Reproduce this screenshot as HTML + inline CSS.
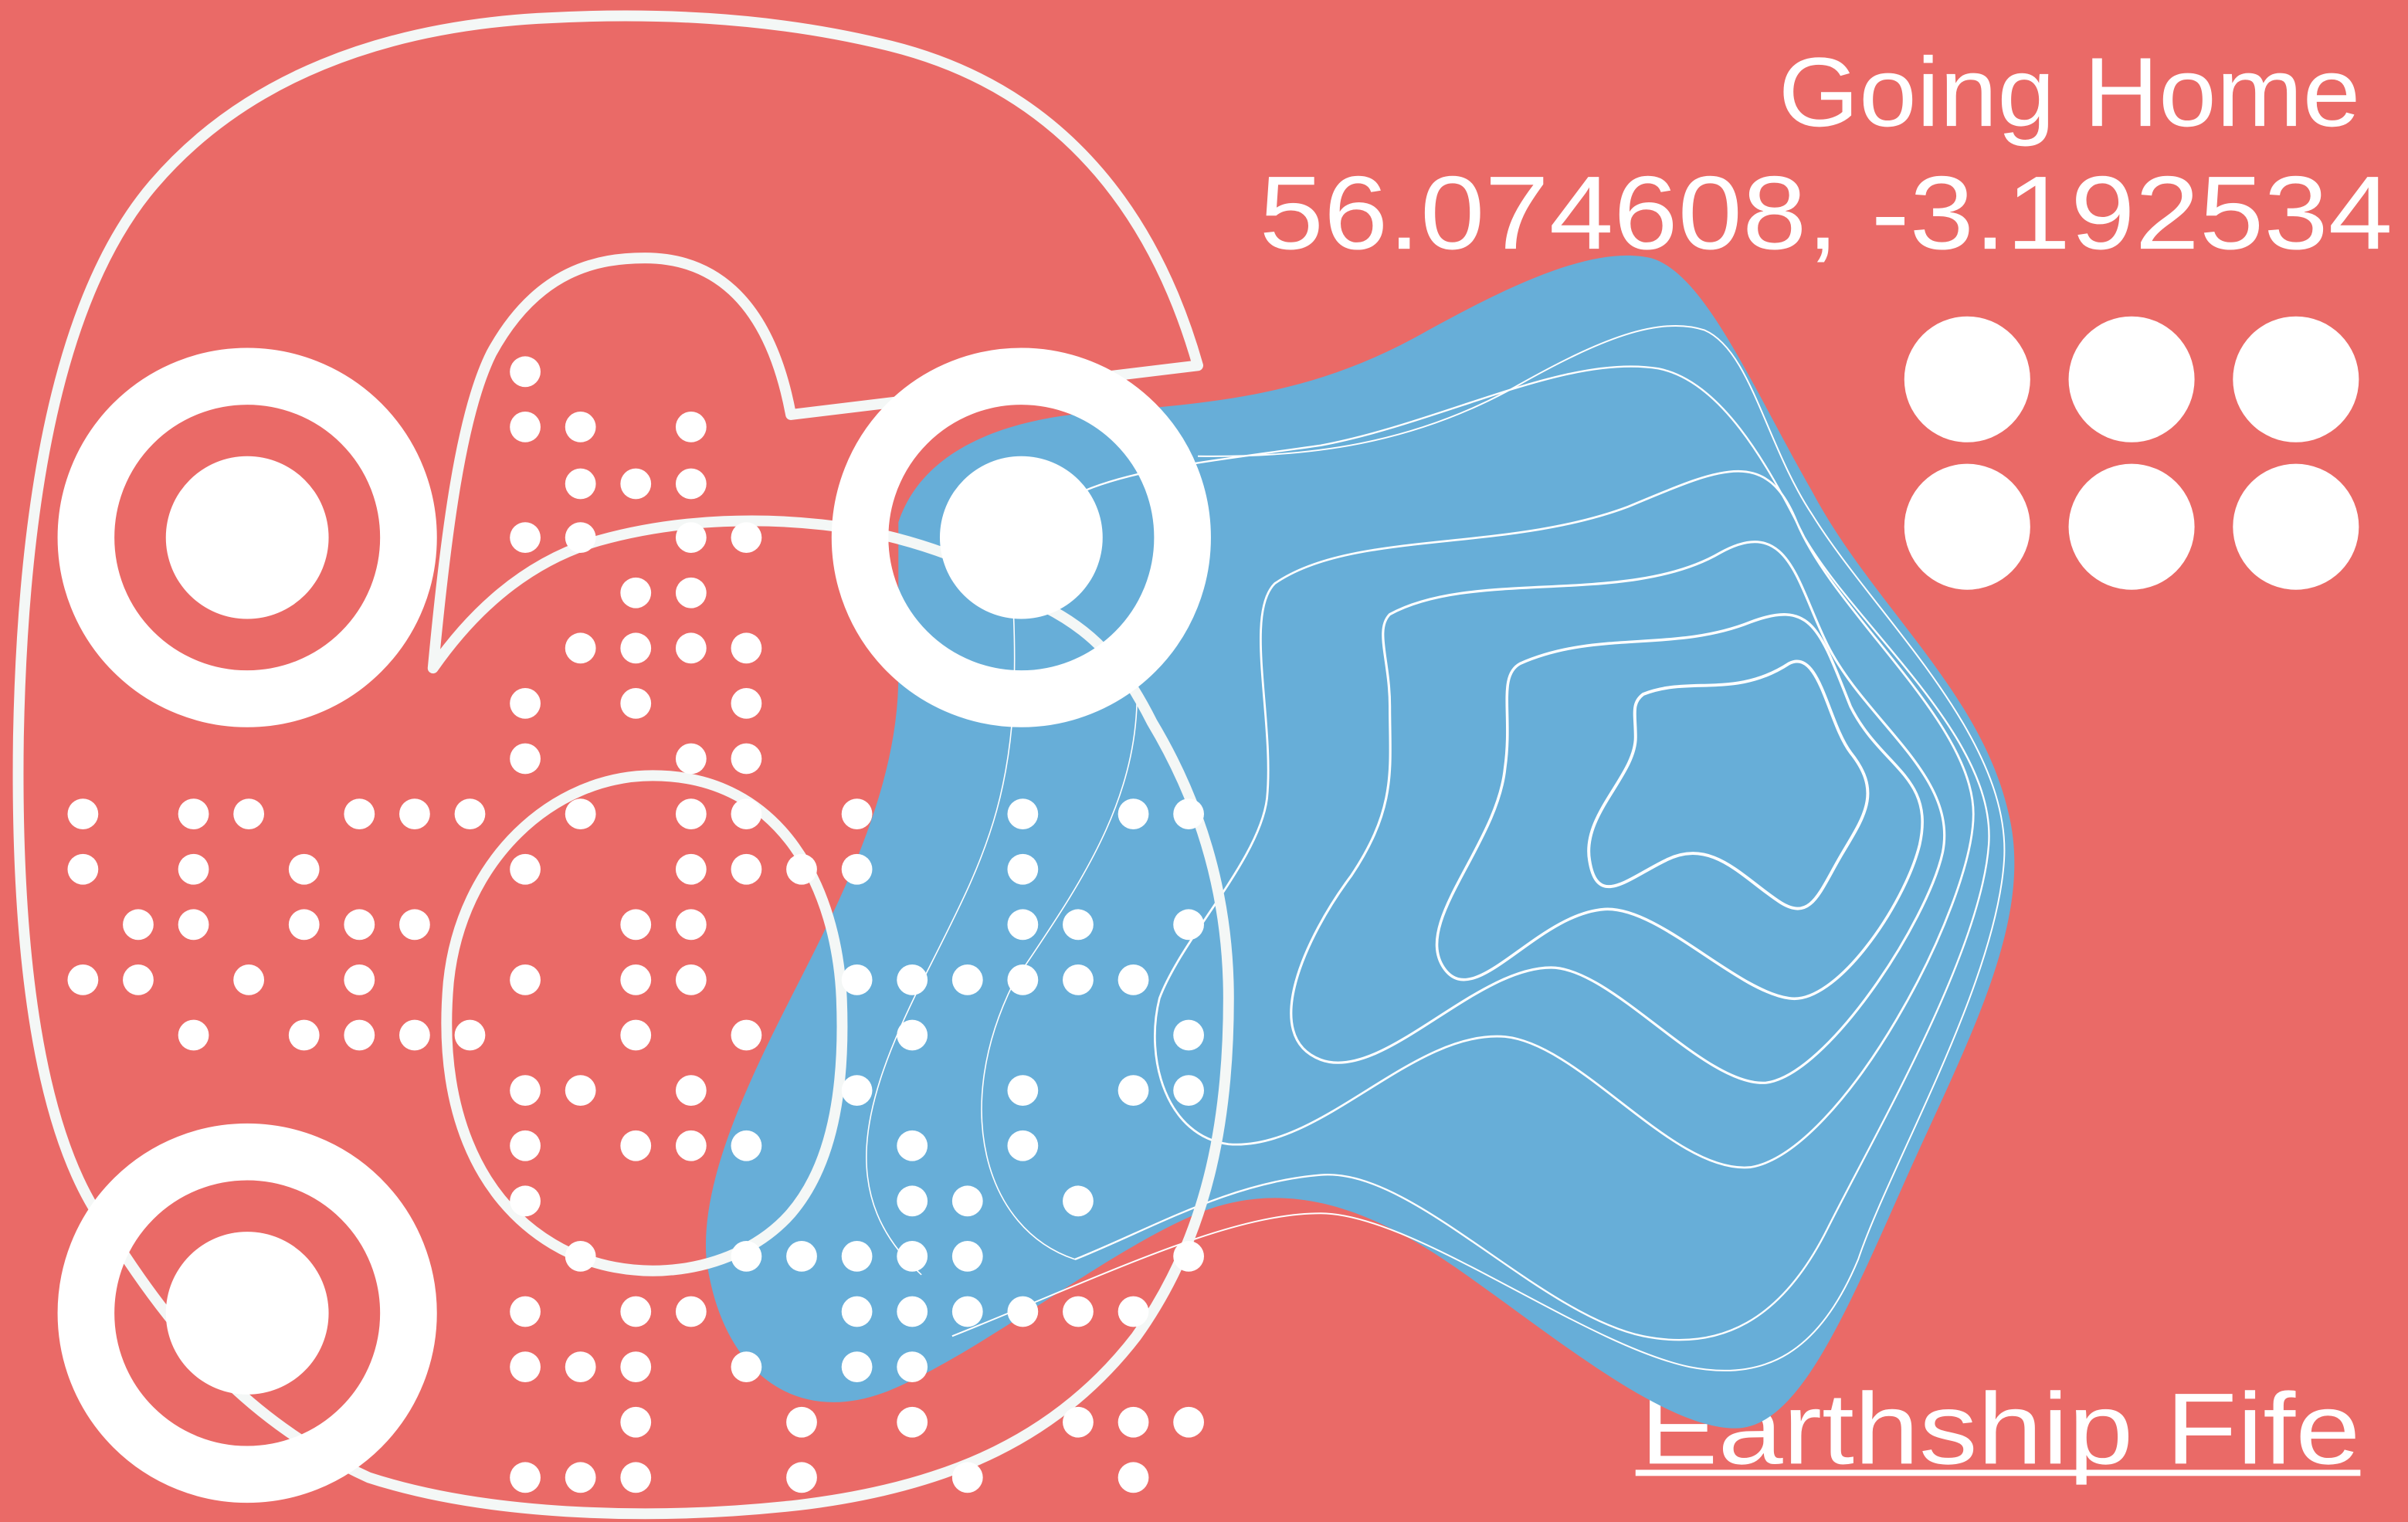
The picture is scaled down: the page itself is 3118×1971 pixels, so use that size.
<!DOCTYPE html>
<html><head><meta charset="utf-8"><style>
html,body{margin:0;padding:0;background:#ea6a67;}
svg{display:block;}
</style></head><body>
<svg width="3118" height="1971" viewBox="0 0 1568 991" preserveAspectRatio="none" xmlns="http://www.w3.org/2000/svg">
<rect x="0" y="0" width="1568" height="991" fill="#ea6a67"/>
<g font-family="Liberation Sans, sans-serif" fill="#fff">
<text x="1158" y="82" font-size="64" textLength="379" lengthAdjust="spacingAndGlyphs">Going Home</text>
<text x="820" y="162" font-size="68" textLength="738" lengthAdjust="spacingAndGlyphs">56.074608, -3.192534</text>
<text x="1068" y="953" font-size="66" textLength="469" lengthAdjust="spacingAndGlyphs">Earthship Fife</text>
<rect x="1065" y="957" width="472" height="4"/>
</g>
<!-- blue blob -->
<path fill="#67aed8" d="M585,340 C600,295 650,272 720,268 C800,262 860,255 930,215 C990,182 1040,160 1075,168 C1110,178 1140,250 1180,320 C1220,395 1290,450 1308,530 C1325,600 1280,680 1240,770 C1200,860 1170,930 1130,930 C1080,930 1000,860 940,820 C880,780 830,770 780,790 C720,815 640,880 580,905 C520,930 470,895 460,820 C455,760 500,680 530,620 C560,560 585,500 585,440 Z"/>
<!-- contours -->
<g fill="none" stroke="#fff">
<path stroke-width="2" d="M1070,452 C1100,440 1130,455 1165,432 C1185,422 1190,470 1205,490 C1225,515 1215,530 1200,555 C1185,580 1180,600 1160,588 C1135,572 1115,545 1085,560 C1060,572 1040,592 1035,560 C1030,530 1065,505 1065,480 C1065,465 1062,458 1070,452Z"/>
<path stroke-width="1.8" d="M990,432 C1040,410 1090,425 1140,405 C1180,390 1185,410 1205,460 C1225,500 1260,505 1250,550 C1240,590 1195,655 1165,650 C1130,645 1080,590 1045,592 C1000,595 960,660 940,630 C920,600 975,550 980,500 C985,465 975,440 990,432Z"/>
<path stroke-width="1.6" d="M905,400 C960,370 1060,395 1120,360 C1165,335 1170,380 1190,420 C1215,470 1275,505 1265,555 C1255,600 1190,700 1150,705 C1110,708 1050,630 1010,630 C960,630 900,705 860,690 C820,675 850,610 880,570 C910,525 905,500 905,460 C905,430 895,410 905,400Z"/>
<path stroke-width="1.4" d="M830,380 C880,345 980,360 1060,330 C1120,305 1150,290 1170,340 C1195,400 1285,470 1285,530 C1285,590 1200,750 1140,760 C1090,765 1030,680 980,675 C920,670 860,750 800,745 C760,740 745,690 755,650 C770,610 820,560 825,520 C830,470 810,400 830,380Z"/>
<path stroke-width="1.2" d="M705,320 C740,305 790,300 860,290 C940,275 1020,230 1080,240 C1120,248 1150,300 1175,350 C1210,410 1300,480 1295,550 C1290,620 1220,740 1190,800 C1160,860 1120,880 1070,870 C1000,855 920,760 860,765 C800,770 750,800 700,820"/>
<path stroke-width="1" d="M780,297 C850,298 920,290 990,250 C1040,222 1080,205 1110,215 C1140,228 1150,290 1180,335 C1220,400 1310,480 1305,560 C1300,640 1230,760 1210,820 C1185,880 1150,900 1100,890 C1030,875 920,790 860,790 C800,790 720,830 620,870"/>
<path stroke-width="0.8" d="M660,400 C665,520 640,560 600,640 C560,720 545,780 600,830"/>
<path stroke-width="0.8" d="M740,440 C745,520 700,580 660,640 C620,720 640,800 700,820"/>
</g>
<!-- big outline -->
<g fill="none" stroke="#f4f7f6" stroke-width="7" stroke-linejoin="round" stroke-linecap="round">
<path d="M780,238 C755,150 700,60 580,30 C500,10 420,8 350,12 C250,18 160,50 100,120 C40,190 15,320 12,480 C10,620 25,740 70,800 C120,880 170,930 240,962 C320,988 430,990 520,980 C620,968 690,935 740,870 C790,800 800,720 800,650 C800,580 780,520 750,470 C730,430 710,410 680,395 C650,372 610,355 560,345 C500,335 440,338 390,352 C345,365 310,395 282,435 C290,350 300,270 320,230 C350,175 390,168 420,168 C460,168 500,190 515,270 L780,238 Z"/>
<path d="M425,505 C360,505 300,560 292,640 C285,720 310,780 360,810 C410,840 480,830 515,790 C545,755 550,700 548,650 C545,580 510,505 425,505 Z"/>
</g>
<!-- dots -->
<g fill="#fff">
<circle cx="342" cy="242" r="10"/>
<circle cx="342" cy="278" r="10"/><circle cx="378" cy="278" r="10"/><circle cx="450" cy="278" r="10"/>
<circle cx="378" cy="315" r="10"/><circle cx="414" cy="315" r="10"/><circle cx="450" cy="315" r="10"/>
<circle cx="342" cy="350" r="10"/><circle cx="378" cy="350" r="10"/><circle cx="450" cy="350" r="10"/><circle cx="486" cy="350" r="10"/>
<circle cx="414" cy="386" r="10"/><circle cx="450" cy="386" r="10"/>
<circle cx="378" cy="422" r="10"/><circle cx="414" cy="422" r="10"/><circle cx="450" cy="422" r="10"/><circle cx="486" cy="422" r="10"/>
<circle cx="342" cy="458" r="10"/><circle cx="414" cy="458" r="10"/><circle cx="486" cy="458" r="10"/>
<circle cx="342" cy="494" r="10"/><circle cx="450" cy="494" r="10"/><circle cx="486" cy="494" r="10"/>
<circle cx="54" cy="530" r="10"/><circle cx="126" cy="530" r="10"/><circle cx="162" cy="530" r="10"/><circle cx="234" cy="530" r="10"/><circle cx="270" cy="530" r="10"/><circle cx="306" cy="530" r="10"/><circle cx="378" cy="530" r="10"/><circle cx="450" cy="530" r="10"/><circle cx="486" cy="530" r="10"/><circle cx="558" cy="530" r="10"/><circle cx="666" cy="530" r="10"/><circle cx="738" cy="530" r="10"/><circle cx="774" cy="530" r="10"/>
<circle cx="54" cy="566" r="10"/><circle cx="126" cy="566" r="10"/><circle cx="198" cy="566" r="10"/><circle cx="342" cy="566" r="10"/><circle cx="450" cy="566" r="10"/><circle cx="486" cy="566" r="10"/><circle cx="522" cy="566" r="10"/><circle cx="558" cy="566" r="10"/><circle cx="666" cy="566" r="10"/>
<circle cx="90" cy="602" r="10"/><circle cx="126" cy="602" r="10"/><circle cx="198" cy="602" r="10"/><circle cx="234" cy="602" r="10"/><circle cx="270" cy="602" r="10"/><circle cx="414" cy="602" r="10"/><circle cx="450" cy="602" r="10"/><circle cx="666" cy="602" r="10"/><circle cx="702" cy="602" r="10"/><circle cx="774" cy="602" r="10"/>
<circle cx="54" cy="638" r="10"/><circle cx="90" cy="638" r="10"/><circle cx="162" cy="638" r="10"/><circle cx="234" cy="638" r="10"/><circle cx="342" cy="638" r="10"/><circle cx="414" cy="638" r="10"/><circle cx="450" cy="638" r="10"/><circle cx="558" cy="638" r="10"/><circle cx="594" cy="638" r="10"/><circle cx="630" cy="638" r="10"/><circle cx="666" cy="638" r="10"/><circle cx="702" cy="638" r="10"/><circle cx="738" cy="638" r="10"/>
<circle cx="126" cy="674" r="10"/><circle cx="198" cy="674" r="10"/><circle cx="234" cy="674" r="10"/><circle cx="270" cy="674" r="10"/><circle cx="306" cy="674" r="10"/><circle cx="414" cy="674" r="10"/><circle cx="486" cy="674" r="10"/><circle cx="594" cy="674" r="10"/><circle cx="774" cy="674" r="10"/>
<circle cx="342" cy="710" r="10"/><circle cx="378" cy="710" r="10"/><circle cx="450" cy="710" r="10"/><circle cx="558" cy="710" r="10"/><circle cx="666" cy="710" r="10"/><circle cx="738" cy="710" r="10"/><circle cx="774" cy="710" r="10"/>
<circle cx="342" cy="746" r="10"/><circle cx="414" cy="746" r="10"/><circle cx="450" cy="746" r="10"/><circle cx="486" cy="746" r="10"/><circle cx="594" cy="746" r="10"/><circle cx="666" cy="746" r="10"/>
<circle cx="342" cy="782" r="10"/><circle cx="594" cy="782" r="10"/><circle cx="630" cy="782" r="10"/><circle cx="702" cy="782" r="10"/>
<circle cx="378" cy="818" r="10"/><circle cx="486" cy="818" r="10"/><circle cx="522" cy="818" r="10"/><circle cx="558" cy="818" r="10"/><circle cx="594" cy="818" r="10"/><circle cx="630" cy="818" r="10"/><circle cx="774" cy="818" r="10"/>
<circle cx="342" cy="854" r="10"/><circle cx="414" cy="854" r="10"/><circle cx="450" cy="854" r="10"/><circle cx="558" cy="854" r="10"/><circle cx="594" cy="854" r="10"/><circle cx="630" cy="854" r="10"/><circle cx="666" cy="854" r="10"/><circle cx="702" cy="854" r="10"/><circle cx="738" cy="854" r="10"/>
<circle cx="342" cy="890" r="10"/><circle cx="378" cy="890" r="10"/><circle cx="414" cy="890" r="10"/><circle cx="486" cy="890" r="10"/><circle cx="558" cy="890" r="10"/><circle cx="594" cy="890" r="10"/>
<circle cx="414" cy="926" r="10"/><circle cx="522" cy="926" r="10"/><circle cx="594" cy="926" r="10"/><circle cx="702" cy="926" r="10"/><circle cx="738" cy="926" r="10"/><circle cx="774" cy="926" r="10"/>
<circle cx="342" cy="962" r="10"/><circle cx="378" cy="962" r="10"/><circle cx="414" cy="962" r="10"/><circle cx="522" cy="962" r="10"/><circle cx="630" cy="962" r="10"/><circle cx="738" cy="962" r="10"/>
</g>
<!-- rings -->
<g fill="none" stroke="#fff" stroke-width="37">
<circle cx="161" cy="350" r="105"/>
<circle cx="665" cy="350" r="105"/>
<circle cx="161" cy="855" r="105"/>
</g>
<g fill="#fff">
<circle cx="161" cy="350" r="53"/>
<circle cx="665" cy="350" r="53"/>
<circle cx="161" cy="855" r="53"/>
<circle cx="1281" cy="247" r="41"/><circle cx="1388" cy="247" r="41"/><circle cx="1495" cy="247" r="41"/>
<circle cx="1281" cy="343" r="41"/><circle cx="1388" cy="343" r="41"/><circle cx="1495" cy="343" r="41"/>
</g>
</svg>
</body></html>
